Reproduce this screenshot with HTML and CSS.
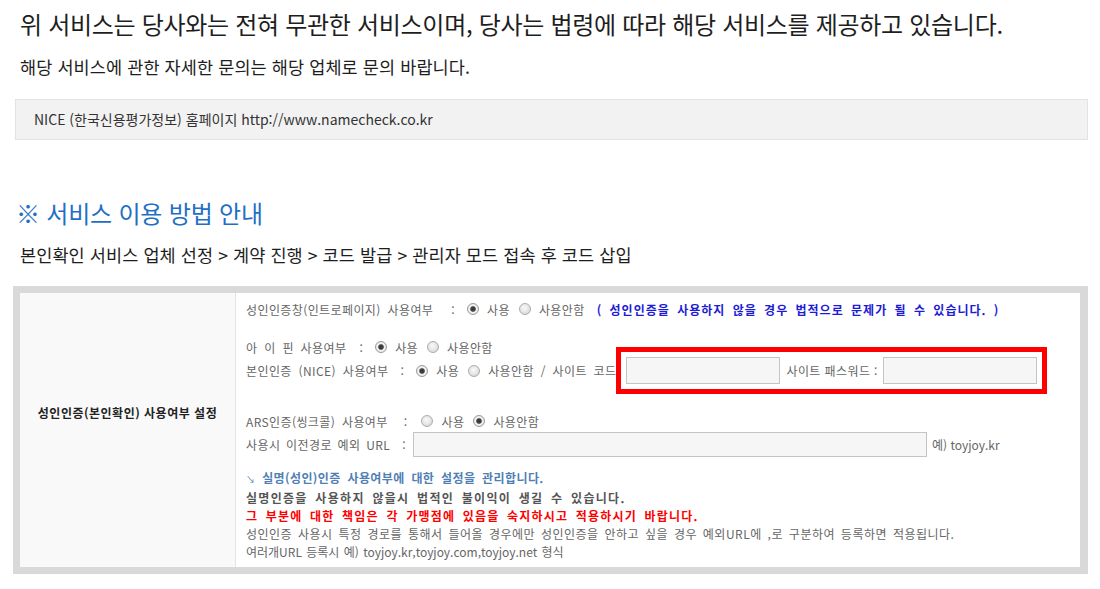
FILE: index.html
```html
<!DOCTYPE html>
<html lang="ko">

<head>
 <meta charset="UTF-8">
 <meta name="viewport" content="width=device-width, initial-scale=1.0">
 <title>본인확인 서비스 설정</title>

 <link rel="stylesheet" href="styles.css">

</head>

<body>

 <div class="page">

  <h2 class="notice">위 서비스는 당사와는 전혀 무관한 서비스이며, 당사는 법령에 따라 해당 서비스를 제공하고 있습니다.</h2>
  <p class="sub">해당 서비스에 관한 자세한 문의는 해당 업체로 문의 바랍니다.</p>

  <div class="infobox">NICE (한국신용평가정보) 홈페이지 http://www.namecheck.co.kr</div>

  <!-- - - - - 이용 방법 - - - - -->
  <h3 class="guide-title">※ 서비스 이용 방법 안내</h3>
  <p class="steps">본인확인 서비스 업체 선정 &gt; 계약 진행 &gt; 코드 발급 &gt; 관리자 모드 접속 후 코드 삽입</p>

  <div class="setting">
   <div class="label-cell">성인인증(본인확인) 사용여부 설정</div>

   <div class="field-cell">
    <div class="row row-intro">
     <span class="name">성인인증창(인트로페이지) 사용여부</span>
     <span class="colon">:</span>
     <span class="radio on"></span><span class="opt">사용</span>
     <span class="radio"></span><span class="opt">사용안함</span>
     <b class="warn">( 성인인증을 사용하지 않을 경우 법적으로 문제가 될 수 있습니다. )</b>
    </div>

    <div class="row row-ipin">
     <span class="name">아 이 핀 사용여부</span>
     <span class="colon">:</span>
     <span class="radio on"></span><span class="opt">사용</span>
     <span class="radio"></span><span class="opt">사용안함</span>
    </div>

    <div class="row row-nice">
     <span class="name">본인인증 (NICE) 사용여부</span>
     <span class="colon">:</span>
     <span class="radio on"></span><span class="opt">사용</span>
     <span class="radio"></span><span class="opt">사용안함 / 사이트 코드</span>
     <span class="mark">
      <input type="text" class="field code">
      <span class="opt">사이트 패스워드 :</span>
      <input type="password" class="field code">
     </span>
    </div>

    <div class="row row-ars">
     <span class="name">ARS인증(씽크콜) 사용여부</span>
     <span class="colon">:</span>
     <span class="radio"></span><span class="opt">사용</span>
     <span class="radio on"></span><span class="opt">사용안함</span>
    </div>

    <div class="row row-url">
     <span class="name">사용시 이전경로 예외 URL</span>
     <span class="colon">:</span>
     <input type="text" class="field url">
     <span class="opt">예) toyjoy.kr</span>
    </div>

    <div class="notes">
     <p class="note-title"><span class="arrow">↘</span> 실명(성인)인증 사용여부에 대한 설정을 관리합니다.</p>
     <p class="note-bold">실명인증을 사용하지 않을시 법적인 불이익이 생길 수 있습니다.</p>
     <p class="note-red">그 부분에 대한 책임은 각 가맹점에 있음을 숙지하시고 적용하시기 바랍니다.</p>
     <p class="note-text">성인인증 사용시 특정 경로를 통해서 들어올 경우에만 성인인증을 안하고 싶을 경우 예외URL에 ,로 구분하여 등록하면 적용됩니다.</p>
     <p class="note-last">여러개URL 등록시 예) toyjoy.kr,toyjoy.com,toyjoy.net 형식</p>
    </div>
   </div>
  </div>

 </div>

</body>

</html>
```

FILE: styles.css
```css
:root {
 --main-font: "Noto Sans CJK KR", "Noto Sans", sans-serif;
 --text-color: #1e1e1e;
 --form-color: #666;
 --blue-title: #1f6fc6;
 --frame-color: #d9d9d9;
}

html {
 box-sizing: border-box;
 font-family: var(--main-font);
}

*,
*::before,
*::after {
 box-sizing: inherit;
}

body {
 margin: 0;
 background: #fff;
 color: var(--text-color);
}

.page {
 padding: 0 12px 0 13px;
}

/* - - - - Aviso superior - - - - */
.notice {
 margin: 0;
 padding: 8px 0 0 7px;
 font-size: 24px;
 font-weight: normal;
 line-height: 32px;
 letter-spacing: -0.3px;
}

.sub {
 margin: 12px 0 0;
 padding-left: 7px;
 font-size: 17.5px;
 line-height: 30px;
 letter-spacing: 0.1px;
}

.infobox {
 margin: 17px 0 0 2px;
 padding-left: 18px;
 line-height: 39px;
 font-size: 14px;
 color: #333;
 background: #f2f2f2;
 border: 1px solid #e3e3e3;
}

/* - - - - Guia - - - - */
.guide-title {
 margin: 57px 0 0 3px;
 font-size: 24px;
 font-weight: normal;
 line-height: 32px;
 color: var(--blue-title);
 letter-spacing: -0.2px;
}

.steps {
 margin: 14px 0 0;
 padding-left: 7px;
 font-size: 17.5px;
 line-height: 24px;
 letter-spacing: 0.1px;
}

/* - - - - Tabla de ajustes - - - - */
.setting {
 display: flex;
 margin-top: 19px;
 height: 288px;
 border: 7px solid var(--frame-color);
 border-right-width: 8px;
 font-size: 12px;
 color: var(--form-color);
}

.label-cell {
 width: 216px;
 flex: none;
 padding-top: 111px;
 text-align: center;
 font-weight: bold;
 color: #222;
 background: #f9f9f9;
 border-right: 1px solid #e4e4e4;
 letter-spacing: 0.5px;
}

.field-cell {
 flex: 1;
 padding: 7px 0 0 10px;
 letter-spacing: 0.4px;
 word-spacing: 3px;
}

.row {
 display: flex;
 align-items: center;
 height: 18px;
 white-space: nowrap;
}

.row-ipin {
 margin-top: 20px;
}

.row-nice {
 height: 27px;
 margin-top: 1px;
}

.row-ars {
 margin-top: 28px;
}

.row-url {
 height: 25px;
 margin-top: 2px;
}

.colon {
 margin: 0 12px 0 13px;
}

.row-intro .colon {
 margin-left: 18px;
}

.row-nice .colon {
 margin: 0 12px 0 12px;
}

.row-ars .colon {
 margin: 0 14px 0 16px;
}

.row-url .colon {
 margin: 0 7px 0 12px;
}

.row-url .name {
 word-spacing: 2px;
}

.opt {
 margin: 0 9px 0 8px;
}

.radio {
 display: inline-block;
 flex: none;
 width: 12px;
 height: 12px;
 border-radius: 50%;
 border: 1px solid #acacac;
 background: radial-gradient(circle at 45% 40%, #fafafa 0, #e4e4e4 55%, #c9c9c9 100%);
}

.radio.on {
 background: radial-gradient(circle, #333 0, #444 2.3px, #f4f4f4 3.3px, #dcdcdc 100%);
 border-color: #999;
}

.warn {
 margin-left: 3px;
 color: #1c1cd6;
 letter-spacing: 1px;
 word-spacing: 3px;
}

/* el recuadro rojo marca los campos del codigo NICE */
.mark {
 display: inline-flex;
 align-items: center;
 margin-left: 1px;
 outline: 5px solid #ff0000;
 outline-offset: 5px;
}

.mark .opt {
 margin: 0 5px 0 6px;
 word-spacing: 0;
}

.field {
 height: 27px;
 border: 1px solid #c4c4c4;
 background: #f6f6f6;
 padding: 0 4px;
 font: inherit;
}

.field.code {
 width: 154px;
}

.field.url {
 width: 514px;
 height: 25px;
}

.row-url .opt {
 margin-left: 5px;
 letter-spacing: 0;
 word-spacing: 0;
}

.notes {
 margin-top: 12px;
}

.notes p {
 margin: 0;
 line-height: 18px;
 white-space: nowrap;
}

.note-title {
 font-weight: bold;
 color: #4f7fb5;
 letter-spacing: 0.4px;
}

.arrow {
 font-size: 9px;
 font-weight: normal;
}

.note-bold {
 font-weight: bold;
 color: #555;
 letter-spacing: 1.3px;
}

.note-red {
 font-weight: bold;
 color: #ff0000;
 letter-spacing: 1.2px;
}

.note-text {
 letter-spacing: 0.5px;
 word-spacing: 2px;
}

.note-last {
 letter-spacing: 0;
 word-spacing: 1px;
}
```
